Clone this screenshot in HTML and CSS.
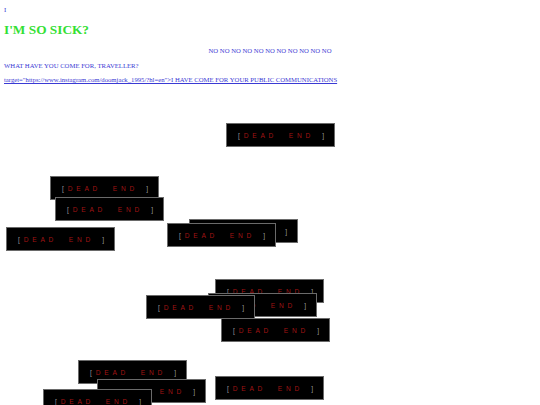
FILE: index.html
```html
<!DOCTYPE html>
<html>
<head>
<meta charset="utf-8">
<link rel="stylesheet" href="styles.css">
</head>
<body>
<div class="intro">
  <p class="line small">I</p>
  <h1 class="title">I'M SO SICK?</h1>
  <p class="line nos">NO NO NO NO NO NO NO NO NO NO NO</p>
  <p class="line ask">WHAT HAVE YOU COME FOR, TRAVELLER?</p>
  <p class="line link"><a class="comm" href="#">target="https://www.instagram.com/doomjack_1995/?hl=en"&gt;I HAVE COME FOR YOUR PUBLIC COMMUNICATIONS</a></p>
</div>
<div class="field">
  <div class="dead" style="left:226px;top:39px"><span class="br">[</span>DEAD END<span class="br end">]</span></div>
  <div class="dead" style="left:50px;top:92px"><span class="br">[</span>DEAD END<span class="br end">]</span></div>
  <div class="dead" style="left:55px;top:113px"><span class="br">[</span>DEAD END<span class="br end">]</span></div>
  <div class="dead" style="left:6px;top:143px"><span class="br">[</span>DEAD END<span class="br end">]</span></div>
  <div class="dead" style="left:189px;top:135px"><span class="br">[</span>DEAD END<span class="br end">]</span></div>
  <div class="dead" style="left:167px;top:139px"><span class="br">[</span>DEAD END<span class="br end">]</span></div>
  <div class="dead" style="left:215px;top:195px"><span class="br">[</span>DEAD END<span class="br end">]</span></div>
  <div class="dead" style="left:208px;top:209px"><span class="br">[</span>DEAD END<span class="br end">]</span></div>
  <div class="dead" style="left:146px;top:211px"><span class="br">[</span>DEAD END<span class="br end">]</span></div>
  <div class="dead" style="left:221px;top:234px"><span class="br">[</span>DEAD END<span class="br end">]</span></div>
  <div class="dead" style="left:78px;top:276px"><span class="br">[</span>DEAD END<span class="br end">]</span></div>
  <div class="dead" style="left:97px;top:295px"><span class="br">[</span>DEAD END<span class="br end">]</span></div>
  <div class="dead" style="left:43px;top:305px"><span class="br">[</span>DEAD END<span class="br end">]</span></div>
  <div class="dead" style="left:215px;top:292px"><span class="br">[</span>DEAD END<span class="br end">]</span></div>
</div>
</body>
</html>
```
FILE: styles.css
```css
html, body {
  margin: 0;
  padding: 0;
  background: #ffffff;
  overflow: hidden;
}
body {
  font-family: "Liberation Serif", "Times New Roman", serif;
  color: #3a3ad4;
}
.intro {
  padding: 6px 4px 0 4px;
  height: 78px;
  display: flex;
  flex-direction: column;
}
.line {
  margin: 0;
  font-size: 6.7px;
  line-height: 8px;
  height: 8px;
  white-space: nowrap;
}
.title {
  margin: 8px 0 0 0;
  font-size: 13.3px;
  line-height: 16px;
  height: 16px;
  font-weight: bold;
  color: #33e033;
}
.nos {
  margin-top: 9px;
  text-align: center;
}
.ask {
  margin-top: 7px;
}
.link {
  margin-top: 6px;
}
.comm {
  color: #3a3ad4;
  text-decoration: underline;
}
.field {
  position: relative;
  height: 321px;
  overflow: hidden;
}
.dead {
  position: absolute;
  box-sizing: border-box;
  width: 109px;
  height: 24px;
  background: #000000;
  border: 1px solid #6a6a6a;
  padding-left: 11px;
  display: flex;
  align-items: center;
  font-family: "Liberation Sans", Arial, sans-serif;
  font-size: 6.6px;
  letter-spacing: 3.8px;
  word-spacing: 6px;
  color: #a01414;
  white-space: pre;
}
.br {
  color: #9a9a9a;
}
.end {
  margin-left: 8px;
}
```
